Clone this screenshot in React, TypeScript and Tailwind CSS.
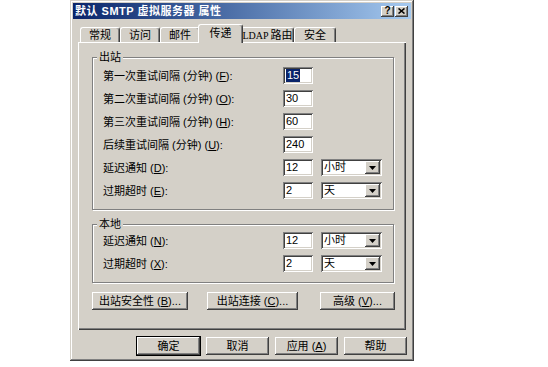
const FONT = "font-['Liberation_Sans','Noto_Sans_CJK_SC',sans-serif]";

const RAISED =
  "bg-[#d4d0c8] shadow-[inset_-1px_-1px_#404040,inset_1px_1px_#ffffff,inset_-2px_-2px_#808080,inset_2px_2px_#d4d0c8]";
const SUNKEN =
  "bg-white shadow-[inset_1px_1px_#808080,inset_-1px_-1px_#ffffff,inset_2px_2px_#404040,inset_-2px_-2px_#d4d0c8]";

const TABS = [
  { label: "常规", w: "w-[40px]" },
  { label: "访问", w: "w-[40px]" },
  { label: "邮件", w: "w-[40px]" },
  { label: "传递", w: "w-[45px]", active: true },
  { label: "LDAP 路由", w: "w-[53px]" },
  { label: "安全", w: "w-[42px]" },
];

function Label({ text, k, tail }: { text: string; k: string; tail?: string }) {
  return (
    <span className="whitespace-nowrap">
      {text} (<u>{k}</u>){tail ?? ":"}
    </span>
  );
}

function Field({ value, selected }: { value: string; selected?: boolean }) {
  return (
    <div className={`w-[30px] h-[17px] ${SUNKEN} flex items-center pl-[3px] text-[11px] leading-[13px]`}>
      {selected ? <span className="bg-[#0a246a] text-white px-px">{value}</span> : value}
    </div>
  );
}

function Combo({ value }: { value: string }) {
  return (
    <div className={`ml-[8px] w-[61px] h-[17px] ${SUNKEN} flex items-center pl-[3px] pr-[2px]`}>
      <span className="flex-1 leading-[13px]">{value}</span>
      <div className={`w-[15px] h-[13px] ${RAISED} flex items-center justify-center`}>
        <svg width="7" height="4" viewBox="0 0 7 4">
          <path d="M0 0h7L3.5 4z" fill="#000" />
        </svg>
      </div>
    </div>
  );
}

function Row({ label, value, combo, selected }: { label: React.ReactNode; value: string; combo?: string; selected?: boolean }) {
  return (
    <div className="flex items-center h-[17px]">
      <div className="w-[180px] leading-[14px]">{label}</div>
      <Field value={value} selected={selected} />
      {combo && <Combo value={combo} />}
    </div>
  );
}

function Button({ children, w, className = "" }: { children: React.ReactNode; w: string; className?: string }) {
  return (
    <div className={`${w} h-[18px] ${RAISED} flex items-center justify-center leading-[14px] ${className}`}>
      {children}
    </div>
  );
}

export default function App() {
  return (
    <div className={`w-[548px] h-[367px] bg-white pl-[70px] ${FONT} text-[11px] text-black`}>
      <div className="w-[344px] h-[361px] p-[3px] bg-[#d4d0c8] shadow-[inset_-1px_-1px_#404040,inset_1px_1px_#d4d0c8,inset_-2px_-2px_#808080,inset_2px_2px_#ffffff] flex flex-col">
        {/* Title bar */}
        <div className="h-[16px] bg-gradient-to-r from-[#0a246a] to-[#a6caf0] flex items-center pl-[2px] pr-[3px]">
          <span className="flex-1 text-white font-bold leading-[14px] tracking-[0.5px] whitespace-nowrap">默认 SMTP 虚拟服务器 属性</span>
          <div className={`w-[13px] h-[11px] ${RAISED} flex items-center justify-center text-[10px] font-bold leading-[10px]`}>?</div>
          <div className={`ml-[1px] w-[13px] h-[11px] ${RAISED} flex items-center justify-center`}>
            <svg width="7" height="6" viewBox="0 0 7 6">
              <path d="M0.5 0.5l6 5M6.5 0.5l-6 5" stroke="#000" strokeWidth="1.6" />
            </svg>
          </div>
        </div>

        {/* Tabs */}
        <div className="mt-[6px] h-[17px] flex items-end pl-[7px] whitespace-nowrap">
          {TABS.map((t) =>
            t.active ? (
              <div
                key={t.label}
                className={`${t.w} relative z-10 -mx-[2px] -mb-[1px] h-[19px] bg-[#d4d0c8] border-t border-l border-white border-r border-r-[#404040] rounded-t-[3px] shadow-[inset_-1px_0_#808080] flex items-start justify-center pt-[1px] leading-[14px]`}
              >
                {t.label}
              </div>
            ) : (
              <div
                key={t.label}
                className={`${t.w} h-[15px] bg-[#d4d0c8] border-t border-l border-white border-r border-r-[#404040] rounded-t-[3px] shadow-[inset_-1px_0_#808080] flex items-center justify-center leading-[13px] ${t.label.startsWith("LDAP") ? "font-['Liberation_Serif','Noto_Sans_CJK_SC',serif] text-[10px]" : ""}`}
              >
                {t.label.startsWith("LDAP") ? (
                  <>
                    LDAP <span className={`${FONT} text-[11px] ml-[2px]`}>路由</span>
                  </>
                ) : (
                  t.label
                )}
              </div>
            )
          )}
        </div>

        {/* Panel */}
        <div className="ml-[5px] w-[328px] h-[288px] shadow-[inset_1px_1px_#ffffff,inset_-1px_-1px_#404040,inset_-2px_-2px_#808080] pl-[14px] pt-[8px] flex flex-col">
          <fieldset className="w-[302px] border border-[#808080] shadow-[1px_1px_0_#ffffff,inset_1px_1px_0_#ffffff]">
            <legend className="ml-[4px] px-[2px] bg-[#d4d0c8] leading-[14px]">出站</legend>
            <div className="pl-[10px] pt-[3px] pb-[10px] flex flex-col gap-[6px]">
              <Row label={<Label text="第一次重试间隔 (分钟)" k="F" />} value="15" selected />
              <Row label={<Label text="第二次重试间隔 (分钟)" k="O" />} value="30" />
              <Row label={<Label text="第三次重试间隔 (分钟)" k="H" />} value="60" />
              <Row label={<Label text="后续重试间隔 (分钟)" k="U" />} value="240" />
              <Row label={<Label text="延迟通知" k="D" />} value="12" combo="小时" />
              <Row label={<Label text="过期超时" k="E" />} value="2" combo="天" />
            </div>
          </fieldset>

          <fieldset className="mt-[7px] w-[302px] border border-[#808080] shadow-[1px_1px_0_#ffffff,inset_1px_1px_0_#ffffff]">
            <legend className="ml-[4px] px-[2px] bg-[#d4d0c8] leading-[14px]">本地</legend>
            <div className="pl-[10px] pt-[1px] pb-[10px] flex flex-col gap-[6px]">
              <Row label={<Label text="延迟通知" k="N" />} value="12" combo="小时" />
              <Row label={<Label text="过期超时" k="X" />} value="2" combo="天" />
            </div>
          </fieldset>

          <div className="mt-[9px] flex">
            <Button w="w-[96px]">
              <Label text="出站安全性" k="B" tail="..." />
            </Button>
            <Button w="w-[91px]" className="ml-[19px]">
              <Label text="出站连接" k="C" tail="..." />
            </Button>
            <Button w="w-[75px]" className="ml-[22px]">
              <Label text="高级" k="V" tail="..." />
            </Button>
          </div>
        </div>

        {/* Bottom buttons */}
        <div className="mt-[7px] flex justify-end gap-[6px] pr-[4px]">
          <Button w="w-[63px]" className="outline outline-1 outline-black">确定</Button>
          <Button w="w-[63px]">取消</Button>
          <Button w="w-[63px]">
            <Label text="应用" k="A" tail="" />
          </Button>
          <Button w="w-[63px]">帮助</Button>
        </div>
      </div>
    </div>
  );
}
